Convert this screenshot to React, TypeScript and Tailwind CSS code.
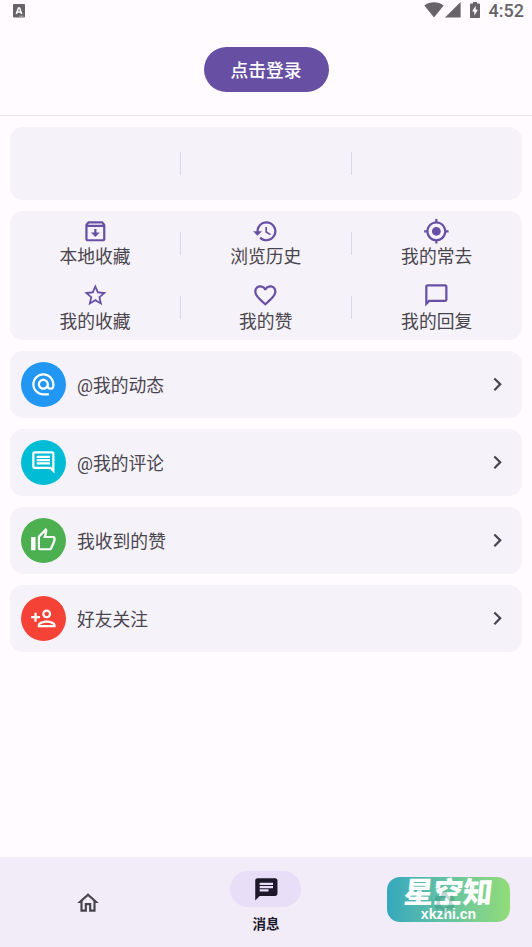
import type { ReactNode } from "react";

function Icon({ d, className }: { d: string; className: string }) {
  return (
    <svg viewBox="0 0 24 24" fill="currentColor" className={className} aria-hidden="true">
      <path d={d} fillRule="evenodd" />
    </svg>
  );
}

const paths = {
  archive:
    "M20.54 5.23l-1.39-1.68C18.88 3.21 18.47 3 18 3H6c-.47 0-.88.21-1.16.55L3.46 5.23C3.17 5.57 3 6.02 3 6.5V19c0 1.1.9 2 2 2h14c1.1 0 2-.9 2-2V6.5c0-.48-.17-.93-.46-1.27zM6.24 5h11.52l.83 1H5.42l.82-1zM5 19V8h14v11H5zM16 13h-3v-3h-2v3H8l4 4z",
  history:
    "M13 3c-4.97 0-9 4.03-9 9H1l3.89 3.89.07.14L9 12H6c0-3.87 3.13-7 7-7s7 3.13 7 7-3.13 7-7 7c-1.93 0-3.68-.79-4.94-2.06l-1.42 1.42C8.27 19.99 10.51 21 13 21c4.97 0 9-4.03 9-9s-4.03-9-9-9zm-1 5v5l4.28 2.54.72-1.21-3.5-2.08V8H12z",
  location:
    "M12 8c-2.21 0-4 1.79-4 4s1.79 4 4 4 4-1.79 4-4-1.79-4-4-4zm8.94 3c-.46-4.17-3.77-7.48-7.94-7.94V1h-2v2.06C6.83 3.52 3.52 6.83 3.06 11H1v2h2.06c.46 4.17 3.77 7.48 7.94 7.94V23h2v-2.06c4.17-.46 7.48-3.77 7.94-7.94H23v-2h-2.06zM12 19c-3.87 0-7-3.13-7-7s3.13-7 7-7 7 3.13 7 7-3.13 7-7 7z",
  star: "M22 9.24l-7.19-.62L12 2 9.19 8.63 2 9.24l5.46 4.73L5.82 21 12 17.27 18.18 21l-1.63-7.03L22 9.24zM12 15.4l-3.76 2.27 1-4.28-3.32-2.88 4.38-.38L12 6.1l1.71 4.04 4.38.38-3.32 2.88 1 4.28L12 15.4z",
  heart:
    "M16.5 3c-1.74 0-3.41.81-4.5 2.09C10.91 3.81 9.24 3 7.5 3 4.42 3 2 5.42 2 8.5c0 3.78 3.4 6.86 8.55 11.54L12 21.35l1.45-1.32C18.6 15.36 22 12.28 22 8.5 22 5.42 19.58 3 16.5 3zm-4.4 15.55l-.1.1-.1-.1C7.14 14.24 4 11.39 4 8.5 4 6.5 5.5 5 7.5 5c1.54 0 3.04.99 3.57 2.36h1.87C13.46 5.99 14.96 5 16.5 5c2 0 3.5 1.5 3.5 3.5 0 2.89-3.14 5.74-7.9 10.05z",
  bubble:
    "M20 2H4c-1.1 0-2 .9-2 2v18l4-4h14c1.1 0 2-.9 2-2V4c0-1.1-.9-2-2-2zm0 14H5.17L4 17.17V4h16v12z",
  at: "M12 1.95c-5.52 0-10 4.48-10 10s4.48 10 10 10h5v-2h-5c-4.34 0-8-3.66-8-8s3.66-8 8-8 8 3.66 8 8v1.43c0 .79-.71 1.57-1.5 1.57s-1.5-.78-1.5-1.57v-1.43c0-2.76-2.24-5-5-5s-5 2.24-5 5 2.24 5 5 5c1.38 0 2.64-.56 3.54-1.47.65.89 1.77 1.47 2.96 1.47 1.97 0 3.5-1.6 3.5-3.57v-1.43c0-5.52-4.48-10-10-10zm0 13c-1.66 0-3-1.34-3-3s1.34-3 3-3 3 1.34 3 3-1.34 3-3 3z",
  comment:
    "M21.99 4c0-1.1-.89-2-1.99-2H4c-1.1 0-2 .9-2 2v12c0 1.1.9 2 2 2h14l4 4-.01-18zM20 4v13.17L18.83 16H4V4h16zM6 12h12v2H6zm0-3h12v2H6zm0-3h12v2H6z",
  thumb:
    "M9 21h9c.83 0 1.54-.5 1.84-1.22l3.02-7.05c.09-.23.14-.47.14-.73v-2c0-1.1-.9-2-2-2h-6.31l.95-4.57.03-.32c0-.41-.17-.79-.44-1.06L14.17 1 7.58 7.59C7.22 7.95 7 8.45 7 9v10c0 1.1.9 2 2 2zM9 9l4.34-4.34L12 10h9v2l-3 7H9V9zM1 9h4v12H1z",
  addPerson:
    "M15 12c2.21 0 4-1.79 4-4s-1.79-4-4-4-4 1.79-4 4 1.79 4 4 4zm0-6c1.1 0 2 .9 2 2s-.9 2-2 2-2-.9-2-2 .9-2 2-2zm0 8c-2.67 0-8 1.34-8 4v2h16v-2c0-2.66-5.33-4-8-4zm-6 4c.22-.72 3.31-2 6-2 2.7 0 5.8 1.29 6 2H9zm-3-3v-3h3v-2H6V7H4v3H1v2h3v3z",
  chevron: "M10 6L8.59 7.41 13.17 12l-4.58 4.59L10 18l6-6z",
  home: "M12 5.69l5 4.5V18h-2v-6H9v6H7v-7.81l5-4.5M12 3L2 12h3v8h6v-6h2v6h6v-8h3L12 3z",
  chat: "M20 2H4c-1.1 0-1.99.9-1.99 2L2 22l4-4h14c1.1 0 2-.9 2-2V4c0-1.1-.9-2-2-2zM6 9h12v2H6V9zm8 5H6v-2h8v2zm4-6H6V6h12v2z",
  settings:
    "M19.43 12.98c.04-.32.07-.64.07-.98s-.03-.66-.07-.98l2.11-1.65c.19-.15.24-.42.12-.64l-2-3.46c-.12-.22-.39-.3-.61-.22l-2.49 1c-.52-.4-1.08-.73-1.69-.98l-.38-2.65C14.46 2.18 14.25 2 14 2h-4c-.25 0-.46.18-.49.42l-.38 2.65c-.61.25-1.17.59-1.69.98l-2.49-1c-.23-.09-.49 0-.61.22l-2 3.46c-.13.22-.07.49.12.64l2.11 1.65c-.04.32-.07.65-.07.98s.03.66.07.98l-2.11 1.65c-.19.15-.24.42-.12.64l2 3.46c.12.22.39.3.61.22l2.49-1c.52.4 1.08.73 1.69.98l.38 2.65c.03.24.24.42.49.42h4c.25 0 .46-.18.49-.42l.38-2.65c.61-.25 1.17-.59 1.69-.98l2.49 1c.23.09.49 0 .61-.22l2-3.46c.12-.22.07-.49-.12-.64l-2.11-1.65zM12 16.5a4.5 4.5 0 1 1 0-9 4.5 4.5 0 0 1 0 9z",
};

const shortcuts = [
  { icon: paths.archive, label: "本地收藏" },
  { icon: paths.history, label: "浏览历史" },
  { icon: paths.location, label: "我的常去" },
  { icon: paths.star, label: "我的收藏" },
  { icon: paths.heart, label: "我的赞" },
  { icon: paths.bubble, label: "我的回复" },
];

const rows = [
  { icon: paths.at, label: "@我的动态", color: "bg-[#2196f3]" },
  { icon: paths.comment, label: "@我的评论", color: "bg-[#00bcd4]" },
  { icon: paths.thumb, label: "我收到的赞", color: "bg-[#4caf50]" },
  { icon: paths.addPerson, label: "好友关注", color: "bg-[#f44336]" },
];

function Cell({ divider, children }: { divider: boolean; children?: ReactNode }) {
  return (
    <div className="flex items-center">
      <div className="flex h-full flex-1 flex-col items-center">{children}</div>
      {divider && <div className="-mr-[0.5px] h-[23px] w-px bg-[#dcd7e0]" />}
    </div>
  );
}

function StatusBar() {
  return (
    <header className="flex h-[22px] shrink-0 items-center pl-[13px] pr-2 text-[#666468]">
      <svg viewBox="0 0 12 14" className="h-3.5 w-3" aria-hidden="true">
        <rect width="12" height="13.4" rx="0.8" fill="currentColor" />
        <path d="M3.3 10L5.4 4h1.2l2.1 6M4.2 8h3.6" fill="none" stroke="#fff" strokeWidth="1.5" />
        <path d="M6.5 12.2h4" stroke="#fff" strokeWidth="0.7" strokeDasharray="1 .5" />
      </svg>
      <div className="ml-auto flex items-center">
        <svg viewBox="0 0 20 16" className="mb-0.5 h-4 w-5" aria-hidden="true">
          <path d="M.3 3.4C6-.9 14-.9 19.7 3.4L10 15.6z" fill="currentColor" />
        </svg>
        <svg viewBox="0 0 16 16" className="mb-0.5 ml-px h-4 w-4" aria-hidden="true">
          <path d="M0 15.6L15.6 0v15.6z" fill="currentColor" />
        </svg>
        <svg viewBox="0 0 10 16" className="mr-px mb-0.5 ml-[9px] h-4 w-2.5" aria-hidden="true">
          <path
            d="M3 0h4v1.5h2.2a.8.8 0 0 1 .8.8v12.9a.8.8 0 0 1-.8.8H.8a.8.8 0 0 1-.8-.8V2.3a.8.8 0 0 1 .8-.8H3zM5.7 3.8L2.1 9.5h2.2v4l3.6-5.8H5.7z"
            fill="currentColor"
            fillRule="evenodd"
          />
        </svg>
        <span className="ml-[8px] text-[18px] leading-[22px] font-medium">4:52</span>
      </div>
    </header>
  );
}

export default function App() {
  return (
    <div className="flex h-[947px] w-[532px] flex-col overflow-hidden bg-[#fffbff] font-['Roboto','Noto_Sans_CJK_SC',sans-serif] text-[#49454e]">
      <StatusBar />
      <div className="flex h-[94px] shrink-0 items-center justify-center border-b border-[#e7e1e9] pt-0.5">
        <button className="h-[45px] w-[125px] rounded-full bg-[#6750a4] pt-[3px] text-[17.8px] font-medium text-white">
          点击登录
        </button>
      </div>
      <main className="flex flex-1 flex-col gap-[11px] px-2.5 pt-[11px]">
        <section className="grid h-[73px] grid-cols-3 rounded-[13px] bg-[#f6f2f9]">
          <Cell divider />
          <Cell divider />
          <Cell divider={false} />
        </section>
        <section className="grid h-[129px] grid-cols-3 grid-rows-2 rounded-[13px] bg-[#f6f2f9]">
          {shortcuts.map((item, i) => (
            <Cell key={item.label} divider={i % 3 !== 2}>
              <Icon d={item.icon} className="mt-[6.5px] size-[26.7px] shrink-0 text-[#6750a4]" />
              <span className="text-[17.8px] leading-[26.5px]">{item.label}</span>
            </Cell>
          ))}
        </section>
        {rows.map((row) => (
          <section key={row.label} className="flex h-[67px] items-center rounded-[13px] bg-[#f6f2f9] px-[11px]">
            <div className={`flex size-[45px] items-center justify-center rounded-full text-white ${row.color}`}>
              <Icon d={row.icon} className="size-[26.7px]" />
            </div>
            <span className="ml-[11px] pt-0.5 text-[17.8px] leading-[26px]">{row.label}</span>
            <Icon d={paths.chevron} className="ml-auto size-[26.7px]" />
          </section>
        ))}
      </main>
      <nav className="grid h-[90px] shrink-0 grid-cols-3 bg-[#f1ecf7]">
        <div className="flex items-center justify-center pt-px pr-px">
          <Icon d={paths.home} className="size-[26px]" />
        </div>
        <div className="flex flex-col items-center pt-[14px] text-[#1d192b]">
          <div className="flex h-9 w-[71px] items-center justify-center rounded-full bg-[#e8def8]">
            <Icon d={paths.chat} className="size-[26.7px]" />
          </div>
          <span className="mt-[7px] text-[13.5px] leading-5 font-bold">消息</span>
        </div>
        <div className="flex justify-end pt-5 pr-[22px]">
          <div className="relative flex h-[45px] w-[123px] flex-col items-center rounded-[13px] bg-gradient-to-r from-[#35a8bd] to-[#92dc78] text-white">
            <span className="-skew-x-[6deg] pt-0.5 text-[29.5px] leading-[29px] font-black">星空知</span>
            <span className="font-['Liberation_Sans',sans-serif] text-[14px] leading-3 font-bold">xkzhi.cn</span>
            <Icon d={paths.settings} className="absolute top-[13px] left-[45px] size-[25px] text-[#237d70]/30" />
          </div>
        </div>
      </nav>
    </div>
  );
}
